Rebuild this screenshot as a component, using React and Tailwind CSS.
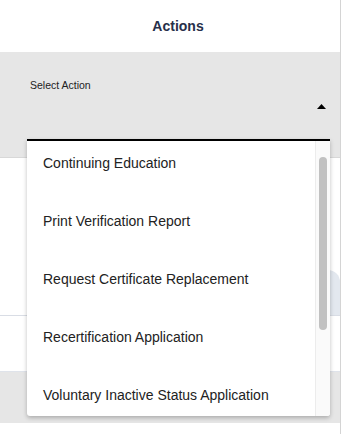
import React from "react";

const items = [
  "Continuing Education",
  "Print Verification Report",
  "Request Certificate Replacement",
  "Recertification Application",
  "Voluntary Inactive Status Application",
];

export default function App() {
  return (
    <div
      className="relative w-[349px] h-[434px] bg-white overflow-hidden"
      style={{ fontFamily: '"Liberation Sans", Arial, sans-serif' }}
    >
      <div className="w-[341px] h-full border-r border-[#d4d4d4] flex flex-col">
        <div className="h-[52px] flex items-center justify-center pl-[16px] shrink-0">
          <span className="text-[14px] font-bold text-[#27304a]">Actions</span>
        </div>
        <div className="h-[106px] bg-[#e6e6e6] shrink-0 relative border-b border-[#d8d8d8]">
          <div className="pl-[30px] pt-[26px] text-[10.5px] leading-[14px] text-[#222]">Select Action</div>
          <div className="flex justify-end pr-[14px] pt-[12px]">
            <svg width="9" height="5" viewBox="0 0 9 5">
              <polygon points="0,5 4.5,0 9,5" fill="#000" />
            </svg>
          </div>
        </div>
        <div className="h-[158px] shrink-0 flex flex-col justify-end border-b border-[#d9dde5]">
          <div className="flex justify-end">
            <div className="w-[120px] h-[45px] bg-[#e3e8ef] rounded-tr-[12px]"></div>
          </div>
        </div>
        <div className="h-[55px] shrink-0"></div>
        <div className="h-[52px] bg-[#e6e6e6] shrink-0 border-t border-[#dfe3ea]"></div>
      </div>

      <div className="absolute left-[27px] top-[139px] w-[303px] h-[277px] bg-white border-t-2 border-black shadow-[0_2px_4px_rgba(0,0,0,0.25)] rounded-b-[3px] flex overflow-hidden">
        <div className="flex-1 overflow-hidden">
          <div className="-mt-[7px]">
            {items.map((t) => (
              <div
                key={t}
                className="h-[58px] flex items-center pl-[16px] text-[14px] text-[#222]"
              >
                {t}
              </div>
            ))}
          </div>
        </div>
        <div className="w-[15px] h-full bg-[#fafafa] border-l border-[#ececec] relative">
          <div className="absolute left-[3px] top-[16px] w-[8px] h-[173px] rounded-full bg-[#c1c1c1]"></div>
        </div>
      </div>
    </div>
  );
}
